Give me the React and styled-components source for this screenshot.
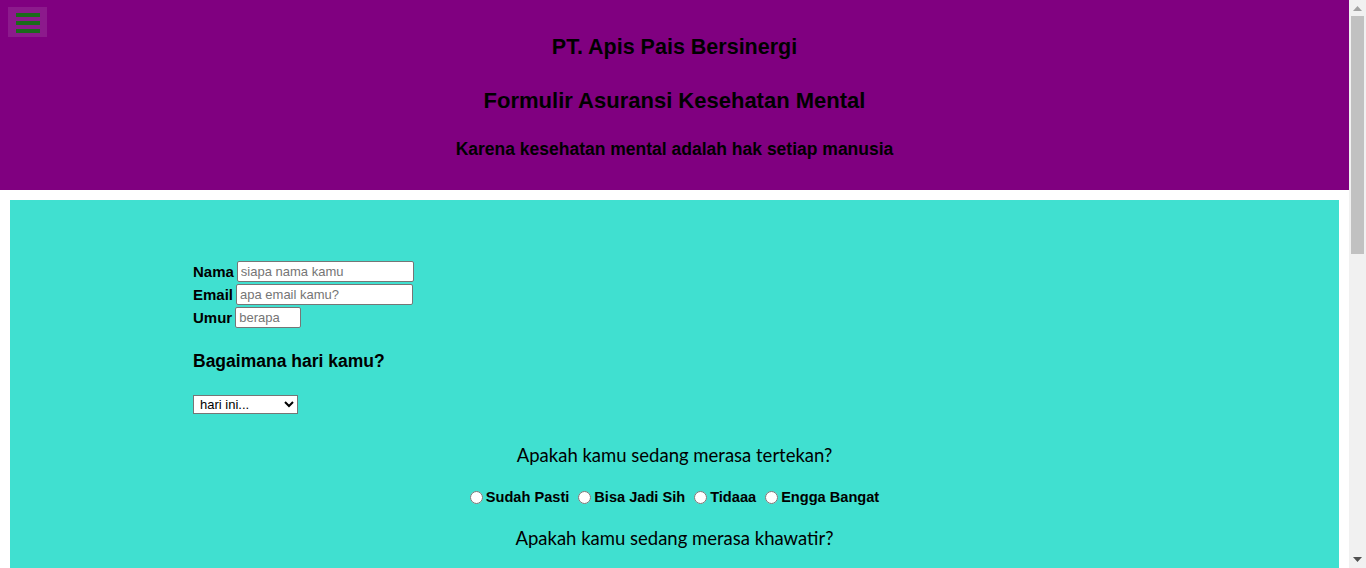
import React from "react";
import styled, { createGlobalStyle } from "styled-components";

const Global = createGlobalStyle`
  html, body { margin: 0; padding: 0; background: #ffffff; }
  body { margin-right: 17px; font-family: "Liberation Sans", Arial, sans-serif; color: #000; }
`;

const Header = styled.header`
  position: relative;
  background: #800080;
  height: 190px;
  box-sizing: border-box;
  padding-top: 34px;
  text-align: center;
`;

const MenuButton = styled.button`
  position: absolute;
  top: 7px;
  left: 8px;
  width: 39px;
  height: 30px;
  padding: 6px 7px 0 8px;
  border: none;
  background: #8c1a8c;
  display: flex;
  flex-direction: column;
  gap: 4px;
  box-sizing: border-box;
`;

const Bar = styled.span`
  display: block;
  width: 24px;
  height: 4px;
  background: #1b6a1b;
`;

const Title = styled.h1`
  margin: 0;
  font-size: ${(p) => p.$size}px;
  line-height: ${(p) => p.$lh}px;
  margin-bottom: ${(p) => p.$mb}px;
  font-weight: bold;
  color: #000;
`;

const Main = styled.main`
  margin: 10px;
  background: #40e0d0;
  min-height: 1064px;
  box-sizing: border-box;
  padding: 60px 0 40px;
`;

const Fields = styled.div`
  padding-left: 183px;
`;

const Row = styled.div`
  display: flex;
  align-items: center;
  gap: 3px;
  height: 23px;
`;

const Label = styled.label`
  font-weight: bold;
  font-size: 15px;
`;

const Input = styled.input`
  width: ${(p) => p.$w}px;
  height: 21px;
  box-sizing: border-box;
  border: 1px solid #767676;
  border-radius: 2px;
  padding: 1px 3px;
  font-family: "Liberation Sans", Arial, sans-serif;
  font-size: 13px;
  background: #fff;
  &::placeholder { color: #757575; }
`;

const SubHeading = styled.h3`
  margin: 22px 0 23px;
  font-size: 17.5px;
  line-height: 21px;
  font-weight: bold;
`;

const Select = styled.select`
  width: 105px;
  height: 19px;
  font-family: "Liberation Sans", Arial, sans-serif;
  font-size: 13px;
  border: 1px solid #767676;
  border-radius: 0;
  background: #fff;
  color: #000;
  padding: 0 2px;
`;

const Question = styled.p`
  margin: ${(p) => p.$mt}px 0 0;
  text-align: center;
  font-family: Lato, "Open Sans", sans-serif;
  font-size: 18.5px;
  line-height: 22px;
`;

const Options = styled.div`
  margin-top: 21px;
  display: flex;
  justify-content: center;
  align-items: center;
  gap: 9px;
  height: 20px;
`;

const Option = styled.label`
  display: flex;
  align-items: center;
  font-weight: bold;
  font-size: 14.6px;
  input { margin: 0 3px 0 0; width: 13px; height: 13px; }
`;

const TextArea = styled.textarea`
  display: block;
  margin: 20px auto 0;
  width: 400px;
  height: 120px;
  font-family: "Liberation Sans", Arial, sans-serif;
  font-size: 13px;
`;

const Submit = styled.button`
  display: block;
  margin: 24px auto 0;
  font-family: "Liberation Sans", Arial, sans-serif;
  font-size: 15px;
  font-weight: bold;
  padding: 6px 20px;
`;

/* overlay imitating the browser's vertical scrollbar */
const ScrollTrack = styled.div`
  position: fixed;
  top: 0;
  right: 0;
  width: 17px;
  height: 100vh;
  background: #f1f1f1;
  display: flex;
  flex-direction: column;
  align-items: center;
`;

const Arrow = styled.div`
  height: 17px;
  width: 17px;
  display: flex;
  align-items: center;
  justify-content: center;
  svg { display: block; }
`;

const ThumbArea = styled.div`
  flex: 1;
  width: 100%;
  display: flex;
  justify-content: center;
`;

const Thumb = styled.div`
  width: 13px;
  height: 238px;
  margin-top: -1px;
  background: #c1c1c1;
`;

const OptionGroup = ({ name, items }) => (
  <Options>
    {items.map((it) => (
      <Option key={it}>
        <input type="radio" name={name} />
        {it}
      </Option>
    ))}
  </Options>
);

const opts = ["Sudah Pasti", "Bisa Jadi Sih", "Tidaaa", "Engga Bangat"];

export default function App() {
  return (
    <>
      <Global />
      <Header>
        <MenuButton aria-label="menu">
          <Bar />
          <Bar />
          <Bar />
        </MenuButton>
        <Title $size={21.5} $lh={26} $mb={28}>PT. Apis Pais Bersinergi</Title>
        <Title $size={22} $lh={26} $mb={25}>Formulir Asuransi Kesehatan Mental</Title>
        <Title $size={17.5} $lh={20} $mb={0}>Karena kesehatan mental adalah hak setiap manusia</Title>
      </Header>
      <Main>
        <Fields>
          <Row>
            <Label>Nama</Label>
            <Input $w={177} placeholder="siapa nama kamu" />
          </Row>
          <Row>
            <Label>Email</Label>
            <Input $w={177} placeholder="apa email kamu?" />
          </Row>
          <Row>
            <Label>Umur</Label>
            <Input $w={66} placeholder="berapa" />
          </Row>
          <SubHeading>Bagaimana hari kamu?</SubHeading>
          <Select defaultValue="">
            <option value="">hari ini...</option>
            <option>Senang</option>
            <option>Biasa saja</option>
            <option>Sedih</option>
          </Select>
        </Fields>
        <Question $mt={30}>Apakah kamu sedang merasa tertekan?</Question>
        <OptionGroup name="tertekan" items={opts} />
        <Question $mt={20}>Apakah kamu sedang merasa khawatir?</Question>
        <OptionGroup name="khawatir" items={opts} />
        <Question $mt={20}>Apakah kamu sulit tidur?</Question>
        <OptionGroup name="tidur" items={opts} />
        <Question $mt={20}>Apakah kamu merasa kesepian?</Question>
        <OptionGroup name="sepi" items={opts} />
        <Question $mt={20}>Ceritakan perasaan kamu</Question>
        <TextArea placeholder="tulis di sini..." />
        <Submit type="submit">Kirim</Submit>
      </Main>
      <ScrollTrack aria-hidden="true">
        <Arrow>
          <svg width="9" height="5" viewBox="0 0 9 5"><path d="M0 5 L4.5 0 L9 5 Z" fill="#a3a3a3" /></svg>
        </Arrow>
        <ThumbArea>
          <Thumb />
        </ThumbArea>
        <Arrow>
          <svg width="9" height="5" viewBox="0 0 9 5"><path d="M0 0 L4.5 5 L9 0 Z" fill="#505050" /></svg>
        </Arrow>
      </ScrollTrack>
    </>
  );
}
